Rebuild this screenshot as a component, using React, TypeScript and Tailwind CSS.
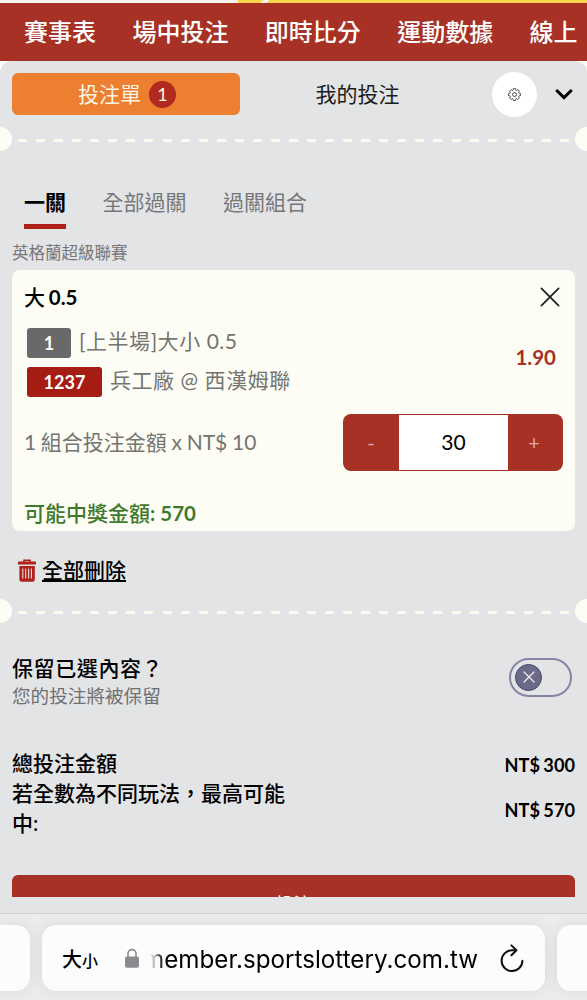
import React, { useState } from 'react';

const navItems = ['賽事表', '場中投注', '即時比分', '運動數據', '線上'];
const tabs = ['一關', '全部過關', '過關組合'];

const selections = [
  { code: '1', label: '[上半場]大小 0.5', width: 'w-11', color: 'bg-[#696969]' },
  { code: '1237', label: '兵工廠 @ 西漢姆聯', width: 'w-[75px]', color: 'bg-[#a51c12]' },
];

const totals = [
  { name: '總投注金額', value: 'NT$ 300' },
  { name: '若全數為不同玩法，最高可能中:', value: 'NT$ 570' },
];

// Ticket style tear line with a notch on both edges
const TearLine: React.FC = () => (
  <div className="relative h-6 flex items-center overflow-hidden px-[18px] shrink-0">
    <span className="absolute -left-3 top-0 w-6 h-6 rounded-full bg-[#fdfdf5]" />
    <div className="flex-1 flex justify-between pt-[3px]">
      {Array.from({ length: 31 }).map((_, i) => (
        <span key={i} className="w-[9px] h-[3px] rounded-[1px] bg-[#fbfbf0]" />
      ))}
    </div>
    <span className="absolute -right-3 top-0 w-6 h-6 rounded-full bg-[#fdfdf5]" />
  </div>
);

const GearIcon: React.FC = () => (
  <svg viewBox="0 0 24 24" className="w-[13px] h-[13px]" fill="none" stroke="#333" strokeWidth="1.6" strokeLinejoin="round">
    <path d="M9.8 1h4.4l.6 3.3 1.3.6 2.8-1.9 3.1 3.1-1.9 2.8.6 1.3 3.3.6v4.4l-3.3.6-.6 1.3 1.9 2.8-3.1 3.1-2.8-1.9-1.3.6-.6 3.3H9.8l-.6-3.3-1.3-.6L5.1 23 2 19.9l1.9-2.8-.6-1.3-3.3-.6v-4.4l3.3-.6.6-1.3L2 6.1 5.1 3l2.8 1.9 1.3-.6z" transform="translate(.9 .1) scale(.92)" />
    <circle cx="12" cy="12" r="3.6" />
  </svg>
);

const TrashIcon: React.FC = () => (
  <svg viewBox="0 0 18 23" className="w-[18px] h-[23px]" fill="none">
    <path d="M6 3V1.2h6V3" stroke="#b02219" strokeWidth="1.5" />
    <rect x="0" y="2.6" width="18" height="2.9" rx=".6" fill="#b02219" />
    <path d="M1.4 7h15.4v13.4a2.3 2.3 0 0 1-2.3 2.3H3.7a2.3 2.3 0 0 1-2.3-2.3z" fill="#b02219" />
    <path d="M4.8 9.5v10M7.7 9.5v10M10.6 9.5v10M13.4 9.5v10" stroke="#e9dddd" strokeWidth="1.1" />
  </svg>
);

const BetCard: React.FC = () => {
  const [amount, setAmount] = useState(30);

  return (
    <div className="mx-3 h-[261px] rounded-lg bg-[#fdfdf5] pl-3 pr-3 flex flex-col">
      <div className="h-[54px] flex items-center justify-between pr-[3px]">
        <h3 className="text-[21px] font-medium text-black [word-spacing:-1.5px]">大 <span className="text-[20.5px] font-bold">0.5</span></h3>
        <svg viewBox="0 0 20 20" className="w-5 h-5" stroke="#1c1c1c" strokeWidth="1.7" strokeLinecap="round">
          <path d="M1.4 1.4l17.2 17.2M18.6 1.4L1.4 18.6" />
        </svg>
      </div>

      <div className="flex items-center justify-between h-[76px] pl-[3px] pr-[7px]">
        <div className="flex flex-col gap-[9px]">
          {selections.map((s) => (
            <div key={s.code} className="flex items-center gap-2 h-[30px]">
              <span className={`${s.width} ${s.color} h-[30px] rounded-[3px] text-white text-lg font-bold flex items-center justify-center`}>
                {s.code}
              </span>
              <span className="text-[21px] tracking-[0.55px] text-[#747471] leading-none whitespace-nowrap pb-1">{s.label}</span>
            </div>
          ))}
        </div>
        <span className="text-[20.5px] font-bold text-[#a63124] pb-[10px]">1.90</span>
      </div>

      <div className="flex items-center justify-between mt-[13px] h-[58px]">
        <span className="text-[21px] text-[#747471] whitespace-nowrap [word-spacing:-0.7px]">1 組合投注金額 x NT$ 10</span>
        <div className="w-[220px] h-[57px] rounded-lg bg-[#a63124] py-px flex overflow-hidden">
          <button className="w-[56px] text-[#dcaaa4] text-xl" onClick={() => setAmount(amount - 10)}>-</button>
          <div className="w-[109px] bg-white flex items-center justify-center text-[21px] text-black">{amount}</div>
          <button className="flex-1 text-[#dcaaa4] text-xl pr-[3px]" onClick={() => setAmount(amount + 10)}>+</button>
        </div>
      </div>

      <p className="mt-[26px] text-[21px] leading-8 font-medium text-[#3f7a2c]">
        可能中獎金額<span className="text-[20.5px] font-bold">: 570</span>
      </p>
    </div>
  );
};

const BrowserBar: React.FC = () => (
  <div className="h-[87px] shrink-0 border-t border-[#cfcfd1] bg-[#ececec] pt-[11px] flex gap-3 overflow-hidden">
    <div className="w-[30px] h-[66px] shrink-0 rounded-r-[14px] bg-[#fcfcfc] shadow-[0_0_16px_rgba(0,0,0,0.08)]" />
    <div className="w-[503px] h-[66px] shrink-0 rounded-[14px] bg-[#fcfcfc] shadow-[0_0_16px_rgba(0,0,0,0.08)] flex items-center pl-5 pr-[21px] text-black">
      <span className="w-[63px] pt-0.5 text-[20px] font-medium whitespace-nowrap">大<span className="text-[16px]">小</span></span>
      <svg viewBox="0 0 14 20" className="w-[14px] h-5" fill="none">
        <path d="M3 9V5.6a4 4 0 0 1 8 0V9" stroke="#8b8b8f" strokeWidth="1.6" />
        <rect x="0" y="8.5" width="14" height="11.2" rx="2" fill="#8b8b8f" />
      </svg>
      <div className="ml-[11px] w-[328px] overflow-hidden flex justify-end whitespace-nowrap font-['Inter',sans-serif] text-[24.2px] pt-1 [mask-image:linear-gradient(to_right,transparent,black_14px)]">
        member.sportslottery.com.tw
      </div>
      <svg viewBox="0 0 24 28" className="ml-auto w-6 h-7" fill="none" stroke="#111" strokeWidth="2" strokeLinecap="round" strokeLinejoin="round">
        <path d="M16 6.3H12A10.4 10.4 0 1 0 22.4 16.7" />
        <path d="M11.4 1.4l5 4.9-5 4.9" />
      </svg>
    </div>
    <div className="w-[60px] h-[66px] shrink-0 rounded-l-[14px] bg-[#fcfcfc] shadow-[0_0_16px_rgba(0,0,0,0.08)]" />
  </div>
);

const App: React.FC = () => {
  const [activeTab, setActiveTab] = useState(0);

  return (
    <div className="w-[587px] h-[1000px] overflow-hidden flex flex-col bg-[#fdfdf5] font-['Lato','Noto_Sans_CJK_TC',sans-serif]">
      {/* Bottom edge of the promo banner */}
      <div className="h-[3px] shrink-0 bg-[#f8d64e] flex">
        <div className="w-[238px] bg-[#f6f3f1]" />
        <div className="w-[24px]" />
        <div className="w-[6px] bg-[#f6f3f1] -skew-x-45" />
      </div>

      <nav className="h-[58px] shrink-0 bg-[#a63124] flex items-center gap-[36.4px] pl-6 text-white text-2xl font-medium whitespace-nowrap">
        {navItems.map((item) => (
          <a key={item}>{item}</a>
        ))}
      </nav>

      <main className="h-[852px] shrink-0 bg-[#e3e4e6] rounded-t-xl flex flex-col overflow-hidden">
        <div className="h-[66px] shrink-0 flex items-center pl-3 pr-[14px]">
          <button className="w-[228px] h-[42px] rounded-md bg-[#ec7f30] text-[#fdf5e4] text-[21px] flex items-center justify-center gap-2 pl-0.5">
            投注單
            <span className="w-[27px] h-[27px] rounded-full bg-[#b02a20] text-lg flex items-center justify-center">1</span>
          </button>
          <button className="w-[235px] text-[21px] text-[#1c1c1c]">我的投注</button>
          <span className="ml-[17px] w-[45px] h-[45px] shrink-0 rounded-full bg-white flex items-center justify-center">
            <GearIcon />
          </span>
          <svg viewBox="0 0 18 12" className="ml-auto w-[18px] h-3" fill="none" stroke="#000" strokeWidth="3">
            <path d="M1.2 2l7.8 7.6L16.8 2" />
          </svg>
        </div>

        <TearLine />

        <div className="h-[78px] shrink-0 flex items-end gap-[36.5px] pl-6 text-[21px]">
          {tabs.map((tab, i) => (
            <button
              key={tab}
              onClick={() => setActiveTab(i)}
              className={`h-[43px] pb-1.5 leading-8 border-b-[5px] ${i === activeTab ? 'border-[#b02219] text-black font-bold' : 'border-transparent text-[#77777a]'}`}
            >
              {tab}
            </button>
          ))}
        </div>

        <p className="h-[41px] shrink-0 pl-3 pt-[12px] text-[16.5px] leading-6 text-[#77777a]">英格蘭超級聯賽</p>

        <BetCard />

        <div className="h-[68px] shrink-0 flex items-center gap-[6px] pl-[18px] pt-[10px]">
          <TrashIcon />
          <a className="text-[21px] leading-8 font-medium text-black underline underline-offset-2 decoration-2">全部刪除</a>
        </div>

        <TearLine />

        <div className="h-[108px] shrink-0 flex items-center justify-between pl-3 pr-[15px]">
          <div className="pt-[10px]">
            <p className="text-[21px] tracking-[0.6px] leading-7 font-medium text-black">保留已選內容？</p>
            <p className="text-[18.6px] leading-7 text-[#707072]">您的投注將被保留</p>
          </div>
          <div className="w-[63px] h-[39px] rounded-full border-2 border-[#8785a3] flex items-center pl-1">
            <span className="w-[27px] h-[27px] rounded-full bg-[#6c6a88] border border-[#45436a] flex items-center justify-center">
              <svg viewBox="0 0 12 12" className="w-3 h-3" stroke="#f0f0f4" strokeWidth="1.2" strokeLinecap="round">
                <path d="M1 1l10 10M11 1L1 11" />
              </svg>
            </span>
          </div>
        </div>

        <div className="mt-[17px] h-[127px] shrink-0 pl-3 pr-3 text-[21px] leading-[30px] font-medium text-black">
          {totals.map((t) => (
            <div key={t.name} className="flex justify-between items-center">
              <span className="w-[280px]">{t.name}</span>
              <span className="h-[26px] text-[18.2px] font-bold [word-spacing:-1px]">{t.value}</span>
            </div>
          ))}
        </div>

        <div className="mx-3 h-[22px] shrink-0 overflow-hidden rounded-t-md bg-[#a63124] text-white text-lg text-center pt-[17px] leading-6">
          投注
        </div>
      </main>

      <BrowserBar />
    </div>
  );
};

export default App;
